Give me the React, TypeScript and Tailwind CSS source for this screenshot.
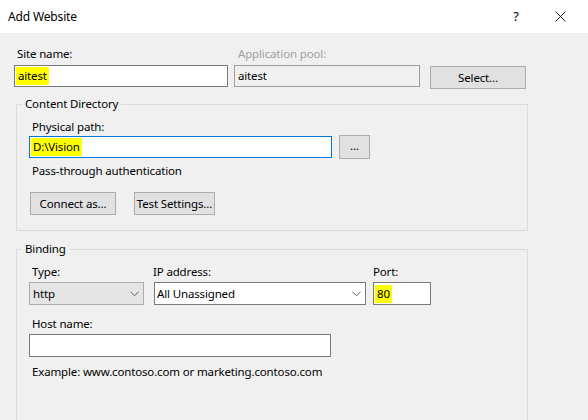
import React from "react";

const font = { fontFamily: '"Noto Sans", "Segoe UI", sans-serif' };

const Chevron: React.FC = () => (
  <svg width="9" height="6" viewBox="0 0 9 6" className="shrink-0">
    <path d="M0.5 0.8 L4.5 4.8 L8.5 0.8" fill="none" stroke="#606060" strokeWidth="1" />
  </svg>
);

const Mark: React.FC<{ children: React.ReactNode }> = ({ children }) => (
  <span className="bg-[#ffff00] px-[2px] leading-[18px]">{children}</span>
);

export default function App() {
  return (
    <div
      className="w-[588px] h-[420px] overflow-hidden bg-white text-[11.5px] tracking-[-0.15px] text-black flex flex-col whitespace-nowrap"
      style={font}
    >
      {/* title bar */}
      <div className="h-[33px] flex items-center pl-[8px] shrink-0">
        <span className="text-[12px]">Add Website</span>
        <span className="ml-auto w-[20px] text-center text-[13px]">?</span>
        <span className="ml-[24px] mr-[18px] w-[20px] flex justify-center">
          <svg width="11" height="11" viewBox="0 0 11 11">
            <path d="M0.5 0.5 L10.5 10.5 M10.5 0.5 L0.5 10.5" stroke="#222" strokeWidth="1" />
          </svg>
        </span>
      </div>

      {/* body */}
      <div className="flex-1 bg-[#f0f0f0] pl-[14px] pt-[13px]">
        <div className="flex items-end">
          <div className="flex flex-col w-[214px]">
            <label className="leading-[16px] pl-[3px] mb-[3px]">Site name:</label>
            <div className="h-[22px] bg-white border border-[#7a7a7a] flex items-center pl-[1px]">
              <Mark>aitest</Mark>
            </div>
          </div>
          <div className="flex flex-col w-[186px] ml-[6px]">
            <label className="leading-[16px] pl-[4px] mb-[3px] text-[#a0a0a0]">Application pool:</label>
            <div className="h-[22px] bg-[#f0f0f0] border border-[#a0a0a0] flex items-center pl-[3px]">
              aitest
            </div>
          </div>
          <button className="ml-[10px] w-[96px] h-[23px] mb-[-2px] bg-[#e1e1e1] border border-[#adadad] flex items-center justify-center">
            Select...
          </button>
        </div>

        {/* Content Directory */}
        <fieldset className="ml-[2px] mt-[9px] w-[512px] border border-[#dcdcdc] pl-[12px] pb-[15px]">
          <legend className="-ml-[7px] px-[3px] leading-[16px]">Content Directory</legend>
          <label className="block leading-[16px] pl-[3px] mt-[7px]">Physical path:</label>
          <div className="flex items-center">
            <div className="w-[303px] h-[22px] bg-white border border-[#0078d7] flex items-center pl-[1px]">
              <Mark>D:\Vision</Mark>
            </div>
            <button className="ml-[7px] w-[31px] h-[24px] bg-[#e1e1e1] border border-[#adadad] flex items-center justify-center leading-none pb-[2px]">
              ...
            </button>
          </div>
          <div className="mt-[4px] pl-[3px] leading-[16px]">Pass-through authentication</div>
          <div className="flex mt-[13px] ml-[1px] gap-[18px]">
            <button className="w-[86px] h-[23px] bg-[#e1e1e1] border border-[#adadad] flex items-center justify-center">
              Connect as...
            </button>
            <button className="w-[81px] h-[23px] bg-[#e1e1e1] border border-[#adadad] flex items-center justify-center">
              Test Settings...
            </button>
          </div>
        </fieldset>

        {/* Binding */}
        <fieldset className="ml-[2px] mt-[10px] w-[512px] h-[200px] border border-[#dcdcdc] pl-[12px]">
          <legend className="-ml-[7px] px-[3px] leading-[16px]">Binding</legend>
          <div className="flex items-end mt-[7px]">
            <div className="flex flex-col w-[115px]">
              <label className="leading-[16px] pl-[3px] mb-[2px]">Type:</label>
              <div className="h-[23px] bg-[#e5e5e5] border border-[#adadad] flex items-center pl-[3px] pr-[4px]">
                <span>http</span>
                <span className="ml-auto"><Chevron /></span>
              </div>
            </div>
            <div className="flex flex-col w-[212px] ml-[10px]">
              <label className="leading-[16px] mb-[2px] -ml-[1px]">IP address:</label>
              <div className="h-[23px] bg-white border border-[#7a7a7a] flex items-center pl-[2px] pr-[4px]">
                <span>All Unassigned</span>
                <span className="ml-auto"><Chevron /></span>
              </div>
            </div>
            <div className="flex flex-col w-[58px] ml-[7px]">
              <label className="leading-[16px] mb-[2px]">Port:</label>
              <div className="h-[23px] bg-white border border-[#7a7a7a] flex items-center pl-[1px]">
                <Mark>80</Mark>
              </div>
            </div>
          </div>
          <label className="block leading-[16px] pl-[3px] mt-[11px] mb-[2px]">Host name:</label>
          <div className="w-[302px] h-[23px] bg-white border border-[#7a7a7a]" />
          <div className="mt-[7px] pl-[3px] leading-[16px]">Example: www.contoso.com or marketing.contoso.com</div>
        </fieldset>
      </div>
    </div>
  );
}
